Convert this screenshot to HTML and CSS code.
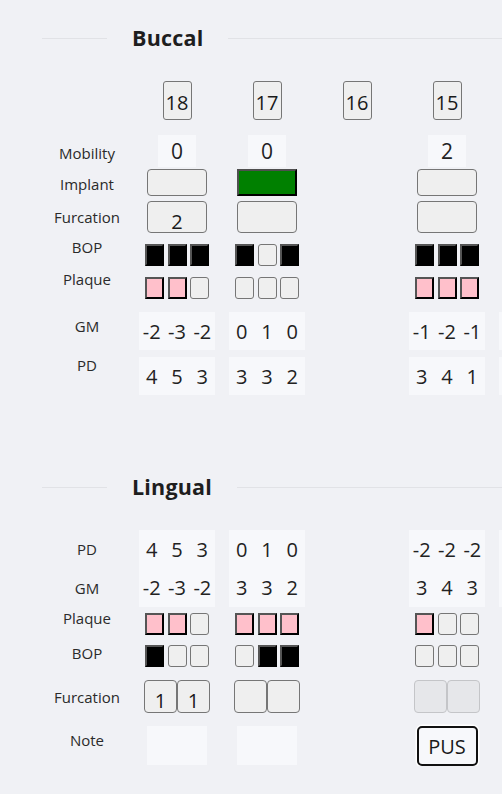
FILE: index.html
```html
<!DOCTYPE html>
<html lang="en">
<head>
<meta charset="utf-8">
<title>Perio chart</title>
<link rel="stylesheet" href="styles.css">
</head>
<body>
<div class="chart">
  <div class="divider divider-buccal"><span>Buccal</span></div>

  <div class="row r-teeth">
    <div class="label"></div>
    <div class="btn tooth">18</div>
    <div class="btn tooth">17</div>
    <div class="btn tooth">16</div>
    <div class="btn tooth">15</div>
  </div>

  <div class="row r-mob">
    <div class="label">Mobility</div>
    <div class="mob">0</div>
    <div class="mob">0</div>
    <div></div>
    <div class="mob">2</div>
  </div>

  <div class="row r-impl">
    <div class="label">Implant</div>
    <div class="btn wide impl"></div>
    <div class="btn wide impl on-green"></div>
    <div></div>
    <div class="btn wide impl"></div>
  </div>

  <div class="row r-furc">
    <div class="label">Furcation</div>
    <div class="btn wide furc">2</div>
    <div class="btn wide furc"></div>
    <div></div>
    <div class="btn wide furc"></div>
  </div>

  <div class="row r-bop split">
    <div class="label">BOP</div>
    <div class="tri"><span class="sq black"></span><span class="sq black"></span><span class="sq black"></span></div>
    <div class="tri"><span class="sq black"></span><span class="sq"></span><span class="sq black"></span></div>
    <div></div>
    <div class="tri"><span class="sq black"></span><span class="sq black"></span><span class="sq black"></span></div>
  </div>

  <div class="row r-plaq split">
    <div class="label">Plaque</div>
    <div class="tri"><span class="sq pink"></span><span class="sq pink"></span><span class="sq"></span></div>
    <div class="tri"><span class="sq"></span><span class="sq"></span><span class="sq"></span></div>
    <div></div>
    <div class="tri"><span class="sq pink"></span><span class="sq pink"></span><span class="sq pink"></span></div>
  </div>

  <div class="row r-gm split">
    <div class="label">GM</div>
    <div class="vals"><span>-2</span><span>-3</span><span>-2</span></div>
    <div class="vals"><span>0</span><span>1</span><span>0</span></div>
    <div></div>
    <div class="vals"><span>-1</span><span>-2</span><span>-1</span></div>
    <div class="vals"></div>
  </div>

  <div class="row r-pd split">
    <div class="label">PD</div>
    <div class="vals"><span>4</span><span>5</span><span>3</span></div>
    <div class="vals"><span>3</span><span>3</span><span>2</span></div>
    <div></div>
    <div class="vals"><span>3</span><span>4</span><span>1</span></div>
    <div class="vals"></div>
  </div>

  <div class="divider divider-lingual"><span>Lingual</span></div>

  <div class="row l-pd">
    <div class="label">PD</div>
    <div class="vals"><span>4</span><span>5</span><span>3</span></div>
    <div class="vals"><span>0</span><span>1</span><span>0</span></div>
    <div></div>
    <div class="vals"><span>-2</span><span>-2</span><span>-2</span></div>
    <div class="vals"></div>
  </div>

  <div class="row l-gm">
    <div class="label">GM</div>
    <div class="vals"><span>-2</span><span>-3</span><span>-2</span></div>
    <div class="vals"><span>3</span><span>3</span><span>2</span></div>
    <div></div>
    <div class="vals"><span>3</span><span>4</span><span>3</span></div>
    <div class="vals"></div>
  </div>

  <div class="row l-plaq split">
    <div class="label">Plaque</div>
    <div class="tri"><span class="sq pink"></span><span class="sq pink"></span><span class="sq"></span></div>
    <div class="tri"><span class="sq pink"></span><span class="sq pink"></span><span class="sq pink"></span></div>
    <div></div>
    <div class="tri"><span class="sq pink"></span><span class="sq"></span><span class="sq"></span></div>
  </div>

  <div class="row l-bop split">
    <div class="label">BOP</div>
    <div class="tri"><span class="sq black"></span><span class="sq"></span><span class="sq"></span></div>
    <div class="tri"><span class="sq"></span><span class="sq black"></span><span class="sq black"></span></div>
    <div></div>
    <div class="tri"><span class="sq"></span><span class="sq"></span><span class="sq"></span></div>
  </div>

  <div class="row l-furc">
    <div class="label">Furcation</div>
    <div class="pair"><span class="btn half">1</span><span class="btn half">1</span></div>
    <div class="pair"><span class="btn half"></span><span class="btn half"></span></div>
    <div></div>
    <div class="pair"><span class="btn half disabled"></span><span class="btn half disabled"></span></div>
  </div>

  <div class="row l-note split">
    <div class="label">Note</div>
    <div class="note"></div>
    <div class="note"></div>
    <div></div>
    <div class="note focused">PUS</div>
  </div>
</div>
</body>
</html>
```

FILE: styles.css
```css
html, body {
  margin: 0;
  padding: 0;
  background: #f0f1f5;
  overflow: hidden;
}

.chart {
  font-family: "Open Sans", "Noto Sans", sans-serif;
  color: #222;
  width: 100%;
  overflow: hidden;
  padding: 23px 0 0 42px;
  box-sizing: border-box;
}

/* dividers */
.divider {
  display: flex;
  align-items: center;
  height: 30px;
  width: 1400px;
}
.divider::before {
  content: "";
  width: 65px;
  height: 1px;
  background: #e1e2e6;
}
.divider::after {
  content: "";
  flex: 1;
  height: 1px;
  background: #e1e2e6;
}
.divider span {
  padding: 0 25px;
  font-size: 21.5px;
  font-weight: 700;
  line-height: 30px;
  color: #1e1e1e;
  letter-spacing: 0.2px;
}
.divider-lingual { margin-top: 77px; }

/* rows */
.row {
  display: grid;
  grid-template-columns: repeat(6, 90px);
  justify-items: center;
  align-items: center;
}
.label {
  font-size: 15px;
  line-height: 20px;
  color: #2a2a2a;
  white-space: nowrap;
}
.split .label { align-self: start; }
.split > :not(.label) { align-self: end; }

.r-teeth { margin-top: 28px; height: 39px; }
.r-mob { margin-top: 15px; height: 32px; }
.r-mob .label { padding-top: 4px; }
.r-impl { margin-top: 2px; height: 27px; }
.r-impl .label { padding-top: 3px; }
.r-furc { margin-top: 5px; height: 32px; }
.r-bop { margin-top: 4px; height: 29px; }
.r-plaq { margin-top: 3px; height: 30px; }
.r-gm { margin-top: 13px; height: 38px; }
.r-gm .label { padding-top: 4px; }
.r-pd { margin-top: 5px; height: 40px; }

.l-pd { margin-top: 28px; height: 38px; }
.l-gm { height: 39px; }
.l-plaq { margin-top: 1px; height: 27px; }
.l-bop { margin-top: 8px; height: 24px; }
.l-furc { margin-top: 13px; height: 33px; }
.l-note { margin-top: 13px; height: 40px; }
.l-note .label { padding-top: 4px; }
.l-note > :not(.label) { align-self: start; }

/* buttons */
.btn {
  box-sizing: border-box;
  background: #efefef;
  border: 1px solid #767676;
  border-radius: 4px;
  display: flex;
  align-items: center;
  justify-content: center;
  color: #1a1a1a;
}
.tooth {
  width: 29px;
  height: 39px;
  font-size: 20px;
  padding-top: 3px;
  border-radius: 3px;
}
.wide { width: 60px; }
.impl { height: 27px; }
.furc {
  height: 32px;
  font-size: 20px;
  padding-top: 9px;
}
.on-green {
  background: #008000;
  border-width: 2.5px;
  border-style: solid;
  border-color: #4f4f4f #000 #000 #4f4f4f;
  border-radius: 0;
}

.mob {
  width: 38px;
  height: 32px;
  background: #f7f8fb;
  font-size: 21px;
  line-height: 32px;
  text-align: center;
}

/* toggle squares */
.tri {
  display: flex;
  gap: 3.6px;
}
.sq {
  box-sizing: border-box;
  width: 19px;
  height: 22px;
  background: #efefef;
  border: 1px solid #767676;
  border-radius: 3px;
}
.sq.black, .sq.pink {
  border-width: 2px;
  border-style: solid;
  border-color: #555 #000 #000 #555;
  border-radius: 0;
}
.sq.black { background: #000; }
.sq.pink { background: #ffc0cb; }

/* value boxes */
.vals {
  display: flex;
  width: 76px;
  height: 100%;
  background: #f7f8fb;
}
.r-gm .vals, .r-pd .vals { height: 38px; }
.vals span {
  flex: 1;
  text-align: center;
  font-size: 20px;
  display: flex;
  align-items: center;
  justify-content: center;
}

/* furcation pairs */
.pair { display: flex; }
.half {
  width: 33px;
  height: 33px;
  font-size: 20px;
  padding-top: 8px;
}
.half.disabled {
  background: #e6e7ea;
  border-color: #c4c5c8;
}

/* notes */
.note {
  box-sizing: border-box;
  width: 60px;
  height: 39px;
  background: #f7f8fb;
  font-size: 20px;
  display: flex;
  align-items: center;
  justify-content: center;
}
.note.focused {
  width: 61px;
  height: 40px;
  border: 2.5px solid #111;
  border-radius: 5px;
  box-shadow: 0 0 0 1.5px #fff;
  color: #1a1a1a;
}
```
